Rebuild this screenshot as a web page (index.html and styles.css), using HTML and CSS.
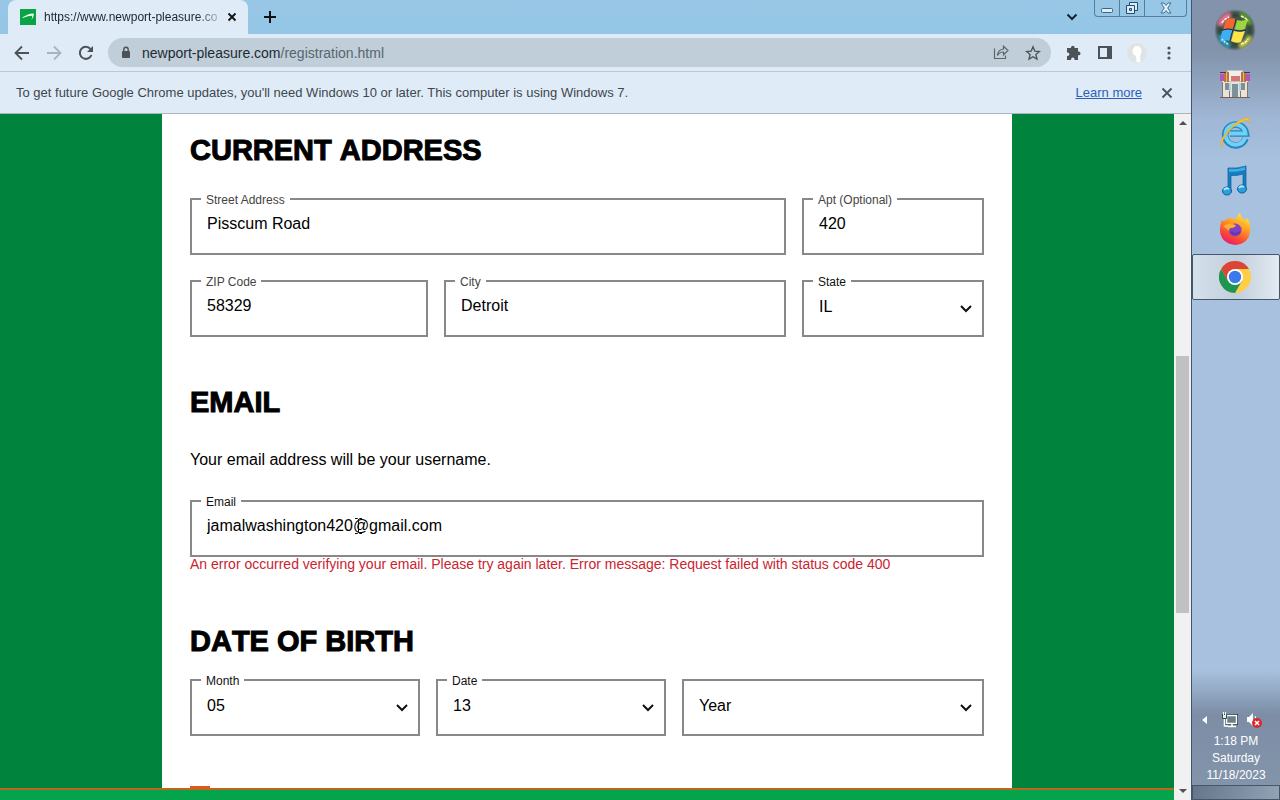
FILE: index.html
```html
<!DOCTYPE html>
<html lang="en">
<head>
<meta charset="utf-8">
<title>Registration</title>
<link rel="stylesheet" href="styles.css">
</head>
<body>
<div class="desktop">
  <div class="browser">
    <header class="tabstrip">
      <div class="tab">
        <svg class="favicon" viewBox="0 0 16 16" width="16" height="16"><path fill="#0aa345" d="M0 0h16v16H0z"/><path fill="#e9fff0" d="M2 8.600Q6 6.500 8 5.600Q12 4 14 4.800L13.500 7Q13 9 11.500 10.500Q12.500 8.500 12 6.700Q8 6.800 3.500 8.800Z"/></svg>
        <span class="tab-title">https://www.newport-pleasure.co</span>
        <button class="icon-btn tab-close" aria-label="Close tab"><svg viewBox="0 0 10 10" width="10" height="10"><path d="M1.500 1.500l7 7M8.500 1.500l-7 7" stroke="#111" stroke-width="1.800"/></svg></button>
      </div>
      <button class="icon-btn new-tab" aria-label="New tab"><svg viewBox="0 0 12 12" width="12" height="12"><path d="M6 0v12M0 6h12" stroke="#111" stroke-width="2"/></svg></button>
      <button class="icon-btn tab-search" aria-label="Search tabs"><svg viewBox="0 0 12 8" width="12" height="8"><path d="M1.500 1.500L6 6l4.500-4.500" fill="none" stroke="#123" stroke-width="2"/></svg></button>
      <div class="window-controls">
        <button class="win-btn" aria-label="Minimize"><svg viewBox="0 0 14 16" width="14" height="16"><rect x="1.500" y="8.500" width="11" height="4" rx="1" fill="#dcecf8" stroke="#3f6480"/></svg></button>
        <button class="win-btn" aria-label="Restore"><svg viewBox="0 0 14 16" width="14" height="16"><path d="M4.500 2.500h8v8h-8z" fill="#dcecf8" stroke="#234d6b"/><path d="M1.500 5.500h8v8h-8z" fill="#dcecf8" stroke="#234d6b"/><path d="M4.500 8.500h2v2h-2z" fill="#9fcbe7" stroke="#234d6b"/></svg></button>
        <button class="win-btn win-close" aria-label="Close"><svg viewBox="0 0 14 16" width="14" height="16"><path d="M2 3h3l2 2.500L9 3h3L8.700 8 12 13H9l-2-2.500L5 13H2l3.300-5z" fill="#e6f2fa" stroke="#3f6f90"/></svg></button>
      </div>
    </header>
    <div class="toolbar">
      <button class="icon-btn" aria-label="Back"><svg viewBox="0 0 16 16" width="16" height="16"><path d="M15 8H2M8 1.500L1.500 8 8 14.500" fill="none" stroke="#4b5258" stroke-width="1.800"/></svg></button>
      <button class="icon-btn" aria-label="Forward"><svg viewBox="0 0 16 16" width="16" height="16"><path d="M1 8h13M8 1.500L14.500 8 8 14.500" fill="none" stroke="#a9b4bd" stroke-width="1.800"/></svg></button>
      <button class="icon-btn" aria-label="Reload"><svg viewBox="0 0 16 16" width="16" height="16"><path d="M13.500 10A6 6 0 1 1 12.500 4" fill="none" stroke="#4b5258" stroke-width="2"/><path d="M15 1v6H9z" fill="#4b5258"/></svg></button>
      <div class="omnibox">
        <svg class="lock" viewBox="0 0 10 14" width="10" height="14"><rect x="1" y="5" width="8" height="7" rx="1" fill="#4b5258"/><path d="M2.800 6V3.500a2.200 2.200 0 0 1 4.400 0V6" fill="none" stroke="#4b5258" stroke-width="1.400"/></svg>
        <span class="url"><span class="host">newport-pleasure.com</span>/registration.html</span>
        <button class="icon-btn" aria-label="Share"><svg viewBox="0 0 16 16" width="16" height="16" fill="none" stroke="#5d666d" stroke-width="1.200"><path d="M1.500 3.500v10h11v-3"/><path d="M4.500 10.500Q5 4.500 10.500 4V1.200l4.500 4.300-4.500 4.300V7Q6.500 7 4.500 10.500z"/></svg></button>
        <button class="icon-btn" aria-label="Bookmark"><svg viewBox="0 0 16 16" width="16" height="16"><path d="M8 1.800l1.800 4.300 4.700.4-3.600 3 1.100 4.600L8 11.700l-4 2.400 1.100-4.600-3.600-3 4.700-.4z" fill="none" stroke="#4b5258" stroke-width="1.300"/></svg></button>
      </div>
      <button class="icon-btn extensions" aria-label="Extensions"><svg viewBox="0 0 16 16" width="16" height="16"><path fill="#4b5258" d="M6 2.500a1.800 1.800 0 0 1 3.600 0V3H13v3.500h.600a1.900 1.900 0 0 1 0 3.800H13V15H9.500v-.700a1.700 1.700 0 0 0-3.400 0v.700H2v-4h.600a1.700 1.700 0 0 0 0-3.600H2V3h4z"/></svg></button>
      <button class="icon-btn" aria-label="Side panel"><svg viewBox="0 0 16 16" width="16" height="16"><path d="M2 2h12v11H2z" fill="none" stroke="#4b5258" stroke-width="2"/><path fill="#4b5258" d="M10 2h4v11h-4z"/></svg></button>
      <button class="icon-btn profile" aria-label="Profile"><svg viewBox="0 0 20 20" width="20" height="20"><circle cx="10" cy="10" r="10" fill="#dfe3e4"/><path fill="#fff" d="M10 3a4.500 5 0 0 1 4.500 5q0 3-1.500 4l.5 7q-2 .5-4 0l-.500-6Q5.500 12 5.500 8a4.500 5 0 0 1 4.500-5z"/></svg></button>
      <button class="icon-btn" aria-label="Menu"><svg viewBox="0 0 4 16" width="4" height="16" fill="#4b5258"><circle cx="2" cy="3" r="1.600"/><circle cx="2" cy="8" r="1.600"/><circle cx="2" cy="13" r="1.600"/></svg></button>
    </div>
    <div class="infobar">
      <span class="infobar-text">To get future Google Chrome updates, you'll need Windows 10 or later. This computer is using Windows 7.</span>
      <a class="infobar-link" href="#">Learn more</a>
      <button class="icon-btn" aria-label="Dismiss"><svg viewBox="0 0 12 12" width="12" height="12"><path d="M1.500 1.500l9 9M10.500 1.500l-9 9" stroke="#4b5258" stroke-width="1.800"/></svg></button>
    </div>
    <div class="content">
      <div class="page">
        <main class="card">
          <form class="form">
            <section>
              <h2 class="heading">CURRENT ADDRESS</h2>
              <div class="address-grid">
                <div class="field field-wide"><label class="label" for="street">Street Address</label><input class="control" id="street" type="text" value="Pisscum Road"></div>
                <div class="field"><label class="label" for="apt">Apt (Optional)</label><input class="control" id="apt" type="text" value="420"></div>
                <div class="field"><label class="label" for="zip">ZIP Code</label><input class="control" id="zip" type="text" value="58329"></div>
                <div class="field"><label class="label" for="city">City</label><input class="control" id="city" type="text" value="Detroit"></div>
                <div class="field"><label class="label label-dark" for="state">State</label><select class="control select" id="state"><option>IL</option></select><svg class="chevron" viewBox="0 0 12 8" width="12" height="8"><path d="M1 1l5 5 5-5"/></svg></div>
              </div>
            </section>
            <section class="section-email">
              <h2 class="heading">EMAIL</h2>
              <p class="note">Your email address will be your username.</p>
              <div class="field"><label class="label label-dark" for="email">Email</label><input class="control" id="email" type="email" value="jamalwashington420@gmail.com">
                <svg class="cursor" viewBox="0 0 7 16" width="7" height="16"><path d="M0 .5h2.500l1 1 1-1H7M3.500 1v14M0 15.500h2.500l1-1 1 1H7" fill="none" stroke="#111"/></svg>
              </div>
              <p class="error">An error occurred verifying your email. Please try again later. Error message: Request failed with status code 400</p>
            </section>
            <section class="section-birth">
              <h2 class="heading">DATE OF BIRTH</h2>
              <div class="birth-grid">
                <div class="field"><label class="label label-dark" for="month">Month</label><select class="control select" id="month"><option>05</option></select><svg class="chevron" viewBox="0 0 12 8" width="12" height="8"><path d="M1 1l5 5 5-5"/></svg></div>
                <div class="field"><label class="label label-dark" for="date">Date</label><select class="control select" id="date"><option>13</option></select><svg class="chevron" viewBox="0 0 12 8" width="12" height="8"><path d="M1 1l5 5 5-5"/></svg></div>
                <div class="field"><select class="control select" aria-label="Year"><option>Year</option></select><svg class="chevron" viewBox="0 0 12 8" width="12" height="8"><path d="M1 1l5 5 5-5"/></svg></div>
              </div>
            </section>
          </form>
          <div class="marker"></div>
        </main>
        <div class="bottom-bar"></div>
      </div>
      <div class="scrollbar">
        <svg viewBox="0 0 8 4" width="8" height="4"><path d="M0 4l4-4 4 4z" fill="#505050"/></svg>
        <div class="track"><div class="thumb"></div></div>
        <svg viewBox="0 0 8 4" width="8" height="4"><path d="M0 0l4 4 4-4z" fill="#505050"/></svg>
      </div>
    </div>
  </div>
  <aside class="taskbar">
    <button class="task start" aria-label="Start"><svg viewBox="0 0 42 42" width="42" height="42">
      <defs>
        <radialGradient id="orb"><stop offset="0" stop-color="#6d8f9a"/><stop offset=".7" stop-color="#2f443c"/><stop offset=".85" stop-color="#43574f"/><stop offset="1" stop-color="#51635c" stop-opacity="0"/></radialGradient>
        <filter id="glow"><feGaussianBlur stdDeviation="1.500"/></filter>
      </defs>
      <circle cx="21" cy="21" r="21" fill="url(#orb)"/>
      <g filter="url(#glow)"><path d="M6 17Q8 8 17 6" fill="none" stroke="#e8739a" stroke-width="6"/><path d="M26 5q8 3 10 11" fill="none" stroke="#5e9c2c" stroke-width="5"/><path d="M36 27q-3 8-11 10" fill="none" stroke="#c6c94a" stroke-width="5"/><path d="M6 26q2 7 10 11" fill="none" stroke="#2f9cc2" stroke-width="5"/></g>
      <path d="M12 11q5-3 10-1l-3 10q-5-2-10 1z" fill="#f0672f"/><path d="M23 11q5 2 11-1l-3 10q-5 2-10 0z" fill="#9cd63f"/><path d="M8 22q5-3 11-1l-3 11q-5-2-10 1z" fill="#3eaff2"/><path d="M20 22q5 2 11 0l-4 11q-5 2-10-1z" fill="#ffe54a"/>
      <path d="M22 10q-1 6-3 11t-3 11M8 21q6-2 12 0t12 0" fill="none" stroke="#29302a"/>
      <path d="M27 7q5 2 7 5M27 35q5-1 7-5M8 14q2-4 7-6" fill="none" stroke="#fff7cf" stroke-width="1.500" stroke-dasharray="3 1"/><path d="M8 30q2 3 6 5" fill="none" stroke="#bdf5ff" stroke-width="1.500" stroke-dasharray="2 1"/></svg></button>
    <button class="task" aria-label="Store"><svg viewBox="0 0 32 32" width="32" height="32">
      <path fill="#e6e4df" d="M3 10h26v18H3z"/><path fill="#eee" stroke="#c8c0b5" d="M8.500 1.500h15v11h-15z"/><path fill="#b854b8" d="M1 5h5v7H1zM26 5h5v7h-5z"/><path fill="#b77636" d="M5 3h5v10H5zM22 3h5v10h-5z"/><path fill="#e5b07c" d="M7 3h1v10H7zM24 3h1v10h-1z"/><path fill="#d9737a" d="M12 7h9v5h-9z"/><path d="M1 3.500h6M25 3.500h6" stroke="#4c3442"/><path fill="#7c929b" d="M6 14h4v7H6zM22 14h4v7h-4zM13 15h6v13h-6z"/><path fill="#b9cfd4" d="M10 14h2v8h-2zM20 14h2v8h-2z"/><path d="M1 28.500h30" stroke="#795e51"/><path d="M3.500 13v15M28.500 13v15M10.500 22v6M21.500 22v6" stroke="#92735c"/></svg></button>
    <button class="task" aria-label="Internet Explorer"><svg viewBox="0 0 32 32" width="32" height="32">
      <path d="M26.500 21.500a10.500 10.500 0 1 1 .5-5H11" fill="none" stroke="#2386bf" stroke-width="6.500"/><path d="M26 21a10 10 0 1 1 .5-4.500H11" fill="none" stroke="#6fd2f5" stroke-width="4"/>
      <path d="M3 30q-4-4 3-13Q15 5 26 1q6-1 5 5-1-4-6-2Q14 8 7 18q-5 7-4 12z" fill="#f5c43b" stroke="#d9a52c" stroke-width=".5"/></svg></button>
    <button class="task" aria-label="Music"><svg viewBox="0 0 32 32" width="32" height="32"><path d="M9 3q9 1 18-2v23h-3V9q-6 2-12 1.500V26H9z" fill="#137fc1" stroke="#0b5e99" stroke-width=".7"/><path d="M10 4q8 1 16-2v3q-8 2-16 2z" fill="#3fb0e8"/><ellipse cx="8" cy="26" rx="4.500" ry="4" fill="#2a9fdf" stroke="#0b5e99"/><ellipse cx="23" cy="24" rx="4.500" ry="4" fill="#2a9fdf" stroke="#0b5e99"/><path d="M5 25q2-3 5-1M20 23q2-3 5-1" fill="none" stroke="#a9e9fa" stroke-width="2"/></svg></button>
    <button class="task" aria-label="Firefox"><svg viewBox="0 0 32 32" width="32" height="32">
      <defs><linearGradient id="fox" x1=".8" y1="0" x2=".3" y2="1"><stop offset="0" stop-color="#fff044"/><stop offset=".4" stop-color="#ff9a24"/><stop offset=".75" stop-color="#fb4736"/><stop offset="1" stop-color="#e81774"/></linearGradient></defs>
      <path d="M3 7q1 1 2 1 3-3 7-3 3 0 5 2 0-4 4-7 1 5 5 7l2-2q4 5 3 13-1 13-15 14Q2 30 1 18 1 11 3 7z" fill="url(#fox)"/><circle cx="16" cy="17" r="6.500" fill="#8042c2"/><path d="M4 13q6-3 9-2l4 1q-1 3-5 3-2 0-2 3-3-3-6-5zM20 11q5 2 4 8 3-5 0-10z" fill="#ffad2f"/><path d="M12 19q4 4 9 0" fill="none" stroke="#6338a5" stroke-width="2"/></svg></button>
    <button class="task task-active" aria-label="Chrome"><svg viewBox="0 0 32 32" width="32" height="32"><circle cx="16" cy="16" r="16" fill="#ffce44"/><path d="M2.140 8A16 16 0 0 1 29.860 8H16L9.070 20z" fill="#db4437"/><path d="M2.140 8A16 16 0 0 0 16 32l6.930-12L9.070 20z" fill="#1e9553"/><circle cx="16" cy="16" r="8" fill="#fff"/><circle cx="16" cy="16" r="6.200" fill="#3c79ea"/></svg></button>
    <div class="tray">
      <div class="tray-icons">
        <svg viewBox="0 0 5 8" width="5" height="8"><path d="M5 0v8L0 4z" fill="#fff"/></svg>
        <svg viewBox="0 0 16 16" width="16" height="16"><path d="M4.500 3.500h10v8h-10z" fill="#6b7f88" stroke="#1f2c35" stroke-width="3"/><path d="M4.500 3.500h10v8h-10z" fill="#6b7f88" stroke="#fff" stroke-width="1.500"/><path d="M6 14.500h8M10 12v2M2.500 7v7H6" stroke="#fff" fill="none" stroke-width="1.500"/><path d="M.5 2.500h4v4h-4z" fill="#e7eef2" stroke="#35434d"/><path d="M1.500 0v3M3.500 0v3" stroke="#fff"/></svg>
        <svg viewBox="0 0 16 16" width="16" height="16"><path d="M1 5h2l4-4v13l-4-4H1z" fill="#fff"/><path d="M9 4q2 3 0 5" fill="none" stroke="#fff"/><circle cx="11" cy="11" r="5" fill="#d8292f"/><path d="M9 9l4 4M13 9l-4 4" stroke="#fff" stroke-width="1.500"/></svg>
      </div>
      <div class="clock">1:18 PM<br>Saturday<br>11/18/2023</div>
      <button class="show-desktop" aria-label="Show desktop"></button>
    </div>
  </aside>
</div>
</body>
</html>
```
FILE: styles.css
```css
* { box-sizing: border-box; }
body { margin: 0; font-family: "Liberation Sans", Arial, sans-serif; color: #000; }
h2, p { margin: 0; }
button { border: 0; padding: 0; background: none; font: inherit; }
svg { display: block; flex: none; }

.desktop { display: flex; height: 100vh; overflow: hidden; }
.browser { flex: 1; min-width: 0; display: flex; flex-direction: column; background: #dfecf7; }

.icon-btn { display: flex; align-items: center; justify-content: center; flex: none; }

.tabstrip { display: flex; align-items: center; height: 34px; padding-left: 8px; background: linear-gradient(#99c7e6, #93c6e6); }
.tab { display: flex; align-items: center; width: 240px; height: 34px; padding: 0 11px 0 12px; border-radius: 8px 8px 0 0; background: #dfecf7; }
.favicon { margin-right: 8px; }
.tab-title { white-space: nowrap; font-size: 12px; color: #1b2530; -webkit-mask-image: linear-gradient(90deg, #000 88%, transparent); mask-image: linear-gradient(90deg, #000 88%, transparent 105%); }
.tab-close { margin-left: auto; }
.new-tab { margin-left: 16px; }
.tab-search { margin-left: auto; }
.window-controls { display: flex; align-self: flex-start; height: 17px; margin: 0 4px 0 16px; border: 1px solid #527f9e; border-top: 0; border-radius: 0 0 4px 4px; }
.win-btn { display: flex; align-items: center; justify-content: center; width: 25px; border-right: 1px solid #527f9e; }
.win-close { width: 41px; border-right: 0; }

.toolbar { display: flex; align-items: center; gap: 16px; height: 38px; padding: 0 20px 0 14px; border-bottom: 1px solid #b9c9d5; }
.omnibox { flex: 1; display: flex; align-items: center; gap: 16px; height: 29px; margin-left: -2px; padding: 0 10px 0 13px; border-radius: 15px; background: #bfced8; }
.extensions { margin-left: -2px; }
.profile { margin: 0 4px 0 -2px; }
.lock { margin-right: -5px; }
.url { flex: 1; font-size: 14px; color: #59656e; }
.host { color: #1f2a33; }

.infobar { display: flex; align-items: center; height: 42px; padding: 0 18px 0 16px; border-bottom: 1px solid #aab4bc; font-size: 13px; color: #3f464d; }
.infobar-text { flex: 1; }
.infobar-link { margin-right: 19px; color: #2d5fb8; }

.content { flex: 1; min-height: 0; display: flex; }
.page { flex: 1; min-width: 0; display: flex; flex-direction: column; background: #00833c; }
.card { flex: 1; min-height: 0; display: flex; flex-direction: column; justify-content: space-between; width: 100%; max-width: 850px; margin: 0 auto; padding: 20px 28px 0; background: #fff; }
.bottom-bar { height: 12px; border-top: 2px solid #c0661c; background: #05a34b; }
.marker { width: 20px; height: 2px; background: #e8541f; }

.heading { font-size: 29px; line-height: 32px; font-weight: 700; font-kerning: none; -webkit-text-stroke: 1px #000; }
.address-grid { display: grid; grid-template-columns: 238fr 342fr 182fr; gap: 25px 16px; margin-top: 32px; }
.field-wide { grid-column: span 2; }
.section-email { margin-top: 49px; }
.note { margin: 33px 0 31px; font-size: 16px; line-height: 18px; }
.error { font-size: 14px; line-height: 14px; color: #c9242f; }
.section-birth { margin-top: 54px; }
.birth-grid { display: grid; grid-template-columns: 230fr 230fr 302fr; gap: 16px; margin-top: 22px; }

.field { position: relative; min-width: 0; }
.label { position: absolute; left: 11px; top: -5px; padding: 0 5px; background: #fff; font-size: 12px; line-height: 14px; color: #444; }
.label-dark { color: #111; }
.control { display: block; width: 100%; height: 57px; padding: 0 15px 6px; border: 2px solid #888; border-radius: 0; outline: 0; appearance: none; background: #fff; font: 16px "Liberation Sans", Arial, sans-serif; color: #000; }
.select { padding-bottom: 4px; }
.chevron { position: absolute; right: 12px; top: 25px; pointer-events: none; }
.chevron path { fill: none; stroke: #111; stroke-width: 2; }
.cursor { position: absolute; left: 165px; top: 18px; }

.scrollbar { display: flex; flex-direction: column; align-items: center; justify-content: space-between; width: 17px; padding: 7px 0; background: #f1f1f1; }
.track { flex: 1; width: 13px; padding: 231px 0 0; }
.thumb { height: 257px; background: #c1c1c1; }

.taskbar { display: flex; flex-direction: column; align-items: center; width: 89px; padding-top: 8px; border-left: 1px solid #40566e; background: linear-gradient(#8393ab 0, #8293ab 50px, #a0b7d6 120px, #a7c1df 160px, #a7c1df calc(100% - 130px), #7c8da5 calc(100% - 85px), #8496ac 100%); }
.task { display: flex; align-items: center; justify-content: center; width: 100%; height: 48px; padding-right: 2px; }
.start { height: 44px; margin-bottom: 9px; }
.task-active { height: 46px; margin-top: 1px; border: 1px solid #46576a; border-radius: 2px; background: linear-gradient(90deg, #d4e0ec, #c2cfdc 50%, #e2eaf1); }
.tray { display: flex; flex-direction: column; width: 100%; margin-top: auto; }
.tray-icons { display: flex; align-items: center; justify-content: center; gap: 8px; padding-right: 9px; }
.tray-icons svg:first-child { margin-right: 7px; }
.clock { margin: 5px 0 1px; font-size: 12px; line-height: 17px; text-align: center; color: #fff; }
.show-desktop { height: 15px; border: 1px solid #46566a; background: linear-gradient(100deg, #65758a, #92a3b6); }
```
